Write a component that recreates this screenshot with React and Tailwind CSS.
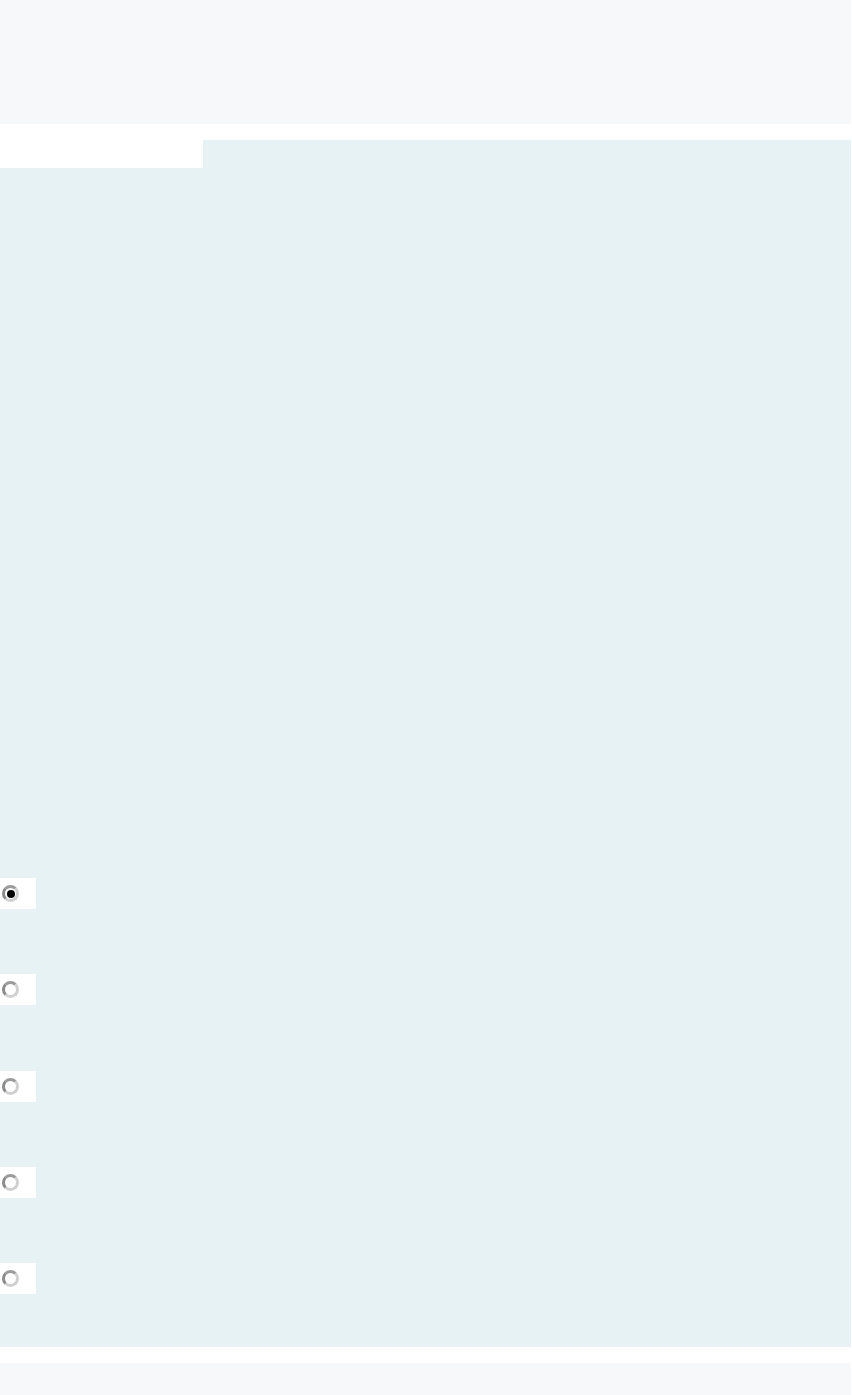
import React, { useState } from 'react';

const options = ['a', 'b', 'c', 'd', 'e'];

const Radio = ({ checked, onClick }) => (
  <div className="w-9 h-[31px] bg-white flex items-center shrink-0" onClick={onClick}>
    <span className="ml-[2px] w-[17px] h-[17px] rounded-full border-[3px] border-[#d0d0d0] border-l-[#8a8a8a] border-t-[#9c9c9c] bg-white flex items-center justify-center">
      {checked && <span className="w-[8px] h-[8px] rounded-full bg-black" />}
    </span>
  </div>
);

export default function App() {
  const [selected, setSelected] = useState(0);

  return (
    <div className="w-[852px] min-h-[1395px] bg-white font-['Liberation_Sans',sans-serif]">
      <header className="w-[851px] h-[124px] bg-[#f7f8fa]" />
      <div className="h-4" />
      <div className="flex w-[851px] h-[28px]">
        <div className="w-[203px] bg-white" />
        <div className="flex-1 bg-[#e6f2f4]" />
      </div>
      <main className="w-[851px] h-[1179px] bg-[#e6f2f4] pt-[710px] flex flex-col gap-[65.25px]">
        {options.map((o, i) => (
          <Radio key={o} checked={selected === i} onClick={() => setSelected(i)} />
        ))}
      </main>
      <div className="h-4" />
      <footer className="w-[851px] h-[32px] bg-[#f7f8fa]" />
    </div>
  );
}
